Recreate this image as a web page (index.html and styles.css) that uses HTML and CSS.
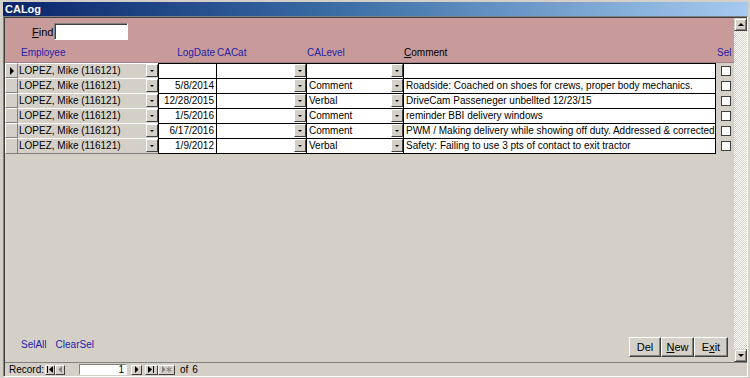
FILE: index.html
```html
<!DOCTYPE html>
<html lang="en">

<head>
    <meta charset="UTF-8">
    <title>CALog</title>
    <link rel="stylesheet" href="styles.css">
</head>

<body>
    <div class="window">
        <div class="titlebar">CALog</div>
        <div class="client">
            <div class="main">
                <div class="form">
                    <div class="header">
                        <div class="find-row">
                            <label class="find-label"><u>F</u>ind</label>
                            <div class="find-box"></div>
                        </div>
                        <div class="grid labels">
                            <span></span>
                            <span class="lbl lbl-emp">Employee</span>
                            <span class="lbl lbl-date">LogDate</span>
                            <span class="lbl">CACat</span>
                            <span class="lbl">CALevel</span>
                            <span class="lbl lbl-comment"><u>C</u>omment</span>
                            <span class="lbl lbl-sel">Sel</span>
                        </div>
                    </div>

                    <div class="detail">
                        <div class="grid row">
                            <div class="selector current"><span class="arrow-right"></span></div>
                            <div class="cell locked combo"><span>LOPEZ, Mike (116121)</span><i class="drop"></i></div>
                            <div class="cell date"></div>
                            <div class="cell combo"><span></span><i class="drop"></i></div>
                            <div class="cell combo"><span></span><i class="drop"></i></div>
                            <div class="cell comment"></div>
                            <div class="gap"></div>
                            <div class="chk-wrap"><span class="chk"></span></div>
                        </div>
                        <div class="grid row">
                            <div class="selector"></div>
                            <div class="cell locked combo"><span>LOPEZ, Mike (116121)</span><i class="drop"></i></div>
                            <div class="cell date">5/8/2014</div>
                            <div class="cell combo"><span></span><i class="drop"></i></div>
                            <div class="cell combo"><span>Comment</span><i class="drop"></i></div>
                            <div class="cell comment">Roadside: Coached on shoes for crews, proper body mechanics.</div>
                            <div class="gap"></div>
                            <div class="chk-wrap"><span class="chk"></span></div>
                        </div>
                        <div class="grid row">
                            <div class="selector"></div>
                            <div class="cell locked combo"><span>LOPEZ, Mike (116121)</span><i class="drop"></i></div>
                            <div class="cell date">12/28/2015</div>
                            <div class="cell combo"><span></span><i class="drop"></i></div>
                            <div class="cell combo"><span>Verbal</span><i class="drop"></i></div>
                            <div class="cell comment">DriveCam Passeneger unbellted 12/23/15</div>
                            <div class="gap"></div>
                            <div class="chk-wrap"><span class="chk"></span></div>
                        </div>
                        <div class="grid row">
                            <div class="selector"></div>
                            <div class="cell locked combo"><span>LOPEZ, Mike (116121)</span><i class="drop"></i></div>
                            <div class="cell date">1/5/2016</div>
                            <div class="cell combo"><span></span><i class="drop"></i></div>
                            <div class="cell combo"><span>Comment</span><i class="drop"></i></div>
                            <div class="cell comment">reminder BBI delivery windows</div>
                            <div class="gap"></div>
                            <div class="chk-wrap"><span class="chk"></span></div>
                        </div>
                        <div class="grid row">
                            <div class="selector"></div>
                            <div class="cell locked combo"><span>LOPEZ, Mike (116121)</span><i class="drop"></i></div>
                            <div class="cell date">6/17/2016</div>
                            <div class="cell combo"><span></span><i class="drop"></i></div>
                            <div class="cell combo"><span>Comment</span><i class="drop"></i></div>
                            <div class="cell comment">PWM / Making delivery while showing off duty. Addressed &amp; corrected</div>
                            <div class="gap"></div>
                            <div class="chk-wrap"><span class="chk"></span></div>
                        </div>
                        <div class="grid row last">
                            <div class="selector"></div>
                            <div class="cell locked combo"><span>LOPEZ, Mike (116121)</span><i class="drop"></i></div>
                            <div class="cell date">1/9/2012</div>
                            <div class="cell combo"><span></span><i class="drop"></i></div>
                            <div class="cell combo"><span>Verbal</span><i class="drop"></i></div>
                            <div class="cell comment">Safety: Failing to use 3 pts of contact to exit tractor</div>
                            <div class="gap"></div>
                            <div class="chk-wrap"><span class="chk"></span></div>
                        </div>
                    </div>

                    <div class="footer">
                        <div class="links">
                            <span class="link">SelAll</span>
                            <span class="link">ClearSel</span>
                        </div>
                        <div class="buttons">
                            <button class="btn btn-del" type="button">Del</button>
                            <button class="btn btn-new" type="button"><u>N</u>ew</button>
                            <button class="btn btn-exit" type="button">E<u>x</u>it</button>
                        </div>
                    </div>
                </div>

                <div class="vscroll">
                    <div class="sb-btn"><span class="tri-up"></span></div>
                    <div class="sb-track"></div>
                    <div class="sb-btn"><span class="tri-down"></span></div>
                </div>
            </div>

            <div class="navbar">
                <span class="nav-label">Record:</span>
                <span class="nav-btn nav-first">
                    <svg width="7" height="7" viewBox="0 0 7 7"><rect x="0" y="0" width="1" height="7" fill="#000"/><polygon points="6,0 2,3.5 6,7" fill="#000"/></svg>
                </span>
                <span class="nav-btn nav-prev disabled">
                    <svg width="7" height="7" viewBox="0 0 7 7"><polygon points="5,0 1.5,3.5 5,7" fill="#808080"/></svg>
                </span>
                <span class="nav-box">1</span>
                <span class="nav-btn nav-next">
                    <svg width="7" height="7" viewBox="0 0 7 7"><polygon points="2,0 5.5,3.5 2,7" fill="#000"/></svg>
                </span>
                <span class="nav-btn nav-last">
                    <svg width="7" height="7" viewBox="0 0 7 7"><polygon points="0,0 4,3.5 0,7" fill="#000"/><rect x="5" y="0" width="1" height="7" fill="#000"/></svg>
                </span>
                <span class="nav-btn nav-new disabled">
                    <svg width="11" height="7" viewBox="0 0 11 7"><polygon points="1,0 4.5,3.5 1,7" fill="#808080"/><path d="M8 0.5v6M5.5 2l5 3M5.5 5l5-3" stroke="#808080" stroke-width="1"/></svg>
                </span>
                <span class="nav-of">of</span>
                <span class="nav-count">6</span>
            </div>
        </div>
    </div>
</body>

</html>
```

FILE: styles.css
```css
* {
    box-sizing: border-box;
}

body {
    margin: 0;
    font-family: "Liberation Sans", Arial, sans-serif;
    font-size: 10px;
    color: #000;
}

.window {
    width: 750px;
    height: 378px;
    background: #d4d0c8;
    padding: 2px 2px 1px 3px;
    display: flex;
    flex-direction: column;
}

.titlebar {
    height: 14px;
    line-height: 14px;
    padding-left: 2px;
    color: #fff;
    font-weight: bold;
    font-size: 11px;
    background: linear-gradient(to right, #0a246a 0%, #3a6ea5 45%, #a6caf0 100%);
}

.client {
    flex: 1;
    display: flex;
    flex-direction: column;
    border: 1px solid;
    border-color: #808080 #fff #fff #808080;
    padding: 1px 0 0 1px;
    box-shadow: inset 1px 1px #404040;
}

.main {
    flex: 1;
    display: flex;
}

.form {
    flex: 1;
    display: flex;
    flex-direction: column;
}

/* form header */
.header {
    height: 45px;
    background: #c99a9a;
    border-bottom: 1px solid #a08080;
}

.find-row {
    display: flex;
    align-items: center;
    padding: 5px 0 0 27px;
    height: 22px;
}

.find-label {
    font-size: 11px;
    width: 22px;
}

.find-box {
    width: 74px;
    height: 17px;
    background: #fff;
    border: 1px solid;
    border-color: #808080 #fff #fff #808080;
    box-shadow: inset 1px 1px #404040;
}

.grid {
    display: grid;
    grid-template-columns: 13px 140px 58px 90px 97px 313px 4px 11px;
}

.labels {
    margin-top: 7px;
    height: 12px;
    line-height: 12px;
}

.lbl {
    color: #2323a8;
    padding-left: 1px;
    white-space: nowrap;
}

.lbl-emp {
    padding-left: 3px;
}

.lbl-date {
    text-align: right;
    padding-right: 1px;
}

.lbl-comment {
    color: #000;
}

.lbl-sel {
    grid-column: 7 / span 2;
}

/* detail rows */
.detail {
    flex: 1;
    background: #d4d0c8;
}

.row {
    height: 15px;
}

.row.last {
    height: 16px;
}

.selector {
    background: #d4d0c8;
    border: 1px solid;
    border-color: #fff #808080 #808080 #fff;
    display: flex;
    align-items: center;
    justify-content: center;
}

.arrow-right {
    width: 0;
    height: 0;
    border-top: 4px solid transparent;
    border-bottom: 4px solid transparent;
    border-left: 4px solid #000;
}

.cell {
    background: #fff;
    border-top: 1px solid #000;
    border-left: 1px solid #000;
    line-height: 13px;
    padding: 0 2px;
    white-space: nowrap;
    overflow: hidden;
}

.row.last .cell {
    border-bottom: 1px solid #000;
}

.cell.locked {
    background: #d4d0c8;
    border-top-color: #fff;
    border-left: none;
    padding-left: 1px;
}

.row.last .cell.locked {
    border-bottom-color: #808080;
}

.date {
    text-align: right;
}

.comment {
    border-right: 1px solid #000;
}

.combo {
    display: flex;
    padding-right: 0;
}

.combo span {
    flex: 1;
    overflow: hidden;
}

.drop {
    width: 12px;
    height: 13px;
    background: #d4d0c8;
    border: 1px solid;
    border-color: #fff #404040 #404040 #fff;
    display: flex;
    align-items: center;
    justify-content: center;
}

.drop::after {
    content: "";
    border-left: 2px solid transparent;
    border-right: 2px solid transparent;
    border-top: 2px solid #000;
}

.chk-wrap {
    display: flex;
    align-items: center;
    justify-content: center;
}

.chk {
    width: 10px;
    height: 10px;
    background: #fff;
    border: 1px solid #404040;
}

/* footer */
.footer {
    height: 30px;
    display: flex;
    justify-content: space-between;
    align-items: flex-end;
    padding: 0 6px 5px 16px;
}

.links {
    display: flex;
    gap: 9px;
    margin-bottom: 7px;
}

.link {
    color: #2323a8;
}

.buttons {
    display: flex;
}

.btn {
    height: 20px;
    padding: 0;
    font-family: "Liberation Sans", Arial, sans-serif;
    font-size: 11px;
    background: #d4d0c8;
    border: 1px solid;
    border-color: #fff #404040 #404040 #fff;
    box-shadow: inset -1px -1px #808080;
}

.btn-del {
    width: 32px;
}

.btn-new {
    width: 33px;
}

.btn-exit {
    width: 34px;
}

/* vertical scrollbar */
.vscroll {
    width: 13px;
    display: flex;
    flex-direction: column;
}

.sb-btn {
    height: 13px;
    background: #d4d0c8;
    border: 1px solid;
    border-color: #d4d0c8 #404040 #404040 #d4d0c8;
    box-shadow: inset 1px 1px #fff, inset -1px -1px #808080;
    display: flex;
    align-items: center;
    justify-content: center;
}

.tri-up {
    border-left: 3px solid transparent;
    border-right: 3px solid transparent;
    border-bottom: 3px solid #000;
}

.tri-down {
    border-left: 3px solid transparent;
    border-right: 3px solid transparent;
    border-top: 3px solid #000;
}

.sb-track {
    flex: 1;
    background: repeating-conic-gradient(#fff 0 25%, #d4d0c8 0 50%) 0 0 / 2px 2px;
}

/* record navigation */
.navbar {
    height: 14px;
    border-top: 1px solid #808080;
    display: flex;
    align-items: center;
    padding-left: 4px;
}

.nav-label {
    margin-right: 1px;
    white-space: nowrap;
}

.nav-btn {
    height: 10px;
    width: 10px;
    background: #d4d0c8;
    border: 1px solid;
    border-color: #fff #404040 #404040 #fff;
    display: flex;
    align-items: center;
    justify-content: center;
}

.nav-prev {
    margin-right: 14px;
}

.nav-box {
    width: 48px;
    height: 11px;
    background: #fff;
    border: 1px solid;
    border-color: #808080 #fff #fff #808080;
    text-align: right;
    line-height: 9px;
    padding-right: 2px;
    margin-right: 4px;
}

.nav-next {
    width: 11px;
    margin-right: 3px;
}

.nav-last {
    width: 13px;
}

.nav-new {
    width: 17px;
}

.nav-of {
    margin-left: 5px;
}

.nav-count {
    margin-left: 4px;
}
```
